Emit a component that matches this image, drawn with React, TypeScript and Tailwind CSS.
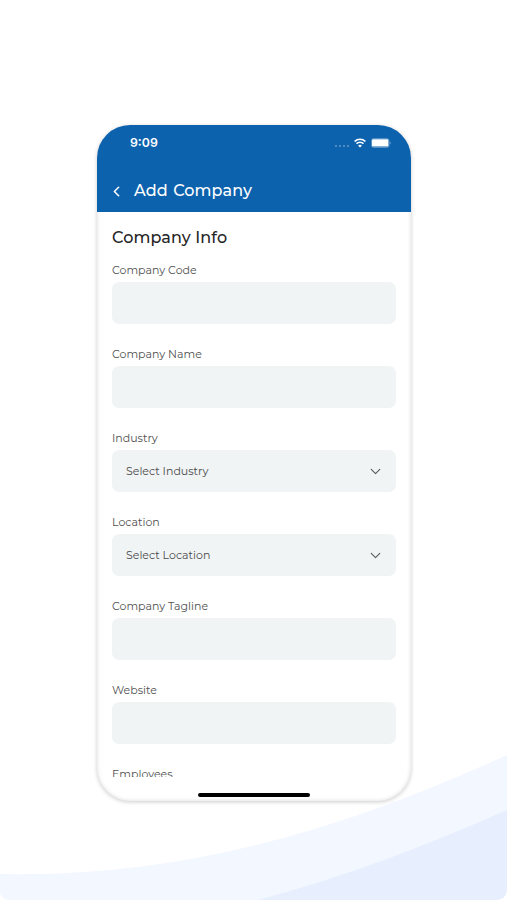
import { ChevronDown, ChevronLeft } from "lucide-react";

interface Field {
  label: string;
  placeholder?: string;
}

const fields: Field[] = [
  { label: "Company Code" },
  { label: "Company Name" },
  { label: "Industry", placeholder: "Select Industry" },
  { label: "Location", placeholder: "Select Location" },
  { label: "Company Tagline" },
  { label: "Website" },
  { label: "Employees" },
];

const StatusBar = () => {
  return (
    <div className="flex h-[35px] items-center justify-between pl-[33px] pr-[20px]">
      <span className="pt-[1px] font-['Inter',sans-serif] text-[12.3px] font-semibold leading-none">9:09</span>
      <div className="flex items-center">
        <div className="mr-[5px] mt-[7px] flex gap-[2px]">
          <span className="size-[2px] rounded-full bg-white/35"></span>
          <span className="size-[2px] rounded-full bg-white/35"></span>
          <span className="size-[2px] rounded-full bg-white/35"></span>
          <span className="size-[2px] rounded-full bg-white/35"></span>
        </div>
        <svg width="12" height="10" viewBox="0 0 12 10" fill="none" stroke="white">
          <path d="M0.6 3.5C3.6 0.5 8.4 0.5 11.4 3.5" strokeWidth="1.7" />
          <path d="M2.5 5.7C4.5 3.8 7.5 3.8 9.5 5.7" strokeWidth="1.6" />
          <path d="M6 9.6L4.1 7.5C5.2 6.5 6.8 6.5 7.9 7.5Z" fill="white" stroke="none" />
        </svg>
        <svg className="ml-[5px]" width="20" height="10" viewBox="0 0 20 10">
          <rect x="0.5" y="0.5" width="17.5" height="9" rx="2.2" fill="none" stroke="white" strokeOpacity="0.3" />
          <rect x="1" y="1.2" width="16.4" height="7.4" rx="1.2" fill="white" />
          <path d="M18.8 3.5C19.9 4 19.9 6 18.8 6.5Z" fill="white" fillOpacity="0.5" />
        </svg>
      </div>
    </div>
  );
};

const FormField = ({ label, placeholder }: Field) => {
  return (
    <div className="h-[84px] shrink-0">
      <label className="block h-[20px] whitespace-nowrap text-[11px] leading-[16px] text-[#505050]">{label}</label>
      <div className="flex h-[42px] items-center justify-between rounded-[7px] bg-[#f1f4f5] pl-[14px] pr-[12px] text-[#4b4b4d]">
        {placeholder && (
          <>
            <span className="text-[11px] leading-[16px]">{placeholder}</span>
            <ChevronDown size={17} strokeWidth={1.7} color="#5c5c5e" />
          </>
        )}
      </div>
    </div>
  );
};

const Background = () => {
  return (
    <svg className="absolute inset-0" width="507" height="900" viewBox="0 0 507 900">
      <path d="M0 874C170 878 330 836 507 755V888Q507 900 495 900H10Q2 900 0 893Z" fill="#f3f7ff" />
      <path d="M258 900C345 877 425 846 507 810V888Q507 900 495 900Z" fill="#e7eefe" />
    </svg>
  );
};

const App = () => {
  return (
    <div className="relative h-[900px] w-[507px] overflow-hidden bg-white pl-[97px] pt-[125px] font-['Montserrat','Inter',sans-serif]">
      <Background />
      <div className="relative flex h-[676px] w-[314px] flex-col overflow-hidden rounded-[33px] bg-white shadow-[0_1px_4px_0px_rgba(0,0,0,0.2),inset_0_0_4px_0px_rgba(0,0,0,0.14)]">
        <header className="h-[87px] shrink-0 bg-[#0d62ae] text-white">
          <StatusBar />
          <div className="mt-[20px] flex h-[22px] items-center pl-[11px]">
            <ChevronLeft size={17} strokeWidth={2.2} />
            <h1 className="ml-[9px] whitespace-nowrap text-[16px] font-medium leading-[22px] tracking-[0.1px] [word-spacing:1px]">
              Add Company
            </h1>
          </div>
        </header>
        <main className="flex h-[565px] flex-col overflow-hidden px-[15px]">
          <h2 className="mb-[12px] mt-[14px] h-[24px] shrink-0 whitespace-nowrap text-[16px] font-medium leading-[24px] tracking-[0.1px] text-[#252525]">
            Company Info
          </h2>
          {fields.map((field) => (
            <FormField key={field.label} {...field} />
          ))}
        </main>
        <div className="mx-auto mt-[16px] h-[4px] w-[112px] shrink-0 rounded-full bg-black"></div>
      </div>
    </div>
  );
};

export default App;
